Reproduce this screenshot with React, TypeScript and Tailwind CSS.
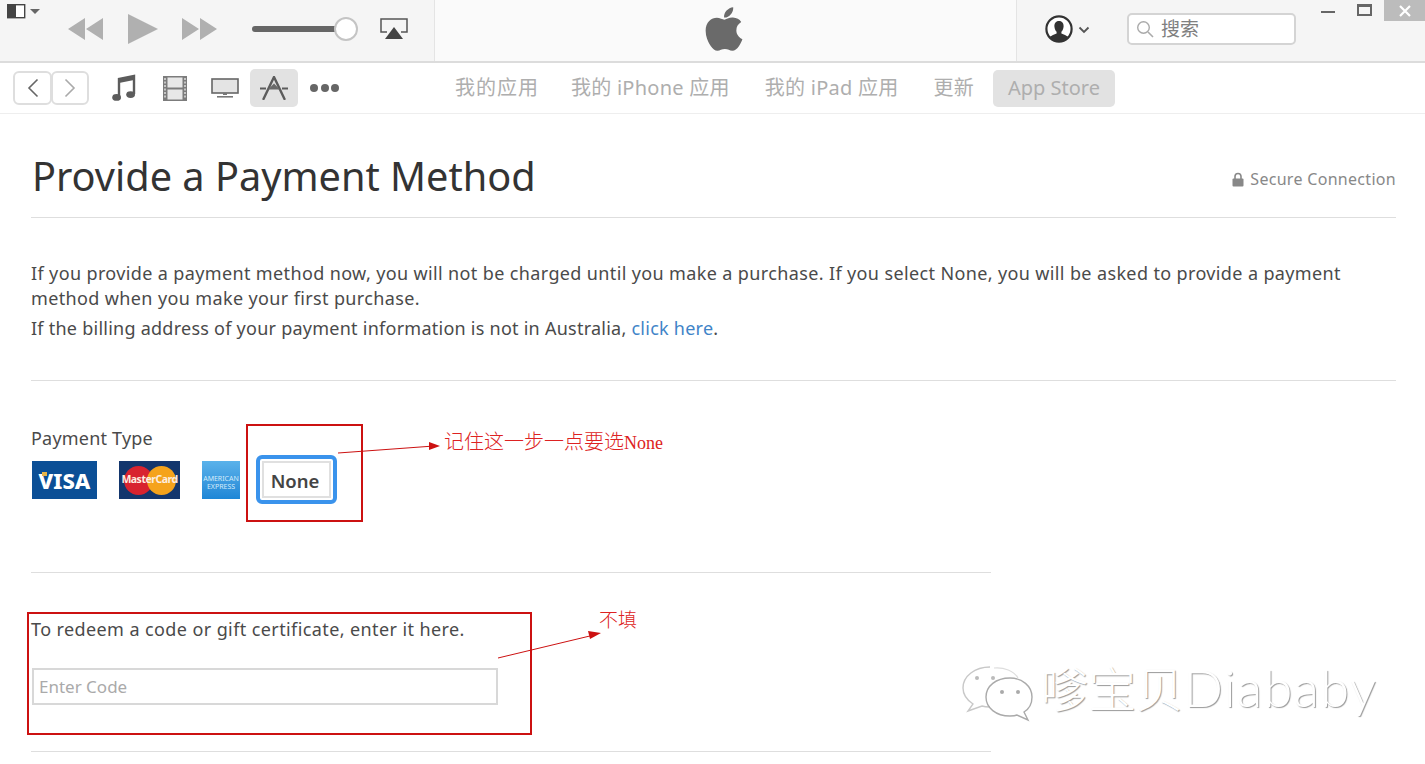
import { FaApple } from "react-icons/fa";

const cjk = "font-['Noto_Sans','Noto_Sans_CJK_SC',sans-serif]";

const Sep = () => <div className="h-px bg-[#dedede]" />;

const TopBar = () => (
  <div className="flex h-[63px] border-b-2 border-[#dcdcdc] bg-[#f5f5f5]">
    <div className="relative flex w-[434px] items-start">
      <svg className="absolute left-[7px] top-[4px]" width="34" height="15" viewBox="0 0 34 15">
        <rect x="0.7" y="0.7" width="17" height="13" fill="#fff" stroke="#444" strokeWidth="1.4" />
        <rect x="1" y="1" width="8" height="13" fill="#444" />
        <path d="M23 5h10l-5 5z" fill="#666" />
      </svg>
      <svg className="ml-[68px] mt-[18px]" width="35" height="22" viewBox="0 0 35 22">
        <path d="M0 11 17 0v22zM18 11 35 0v22z" fill="#b0b0b0" />
      </svg>
      <svg className="ml-[25px] mt-[14px]" width="30" height="30" viewBox="0 0 30 30">
        <path d="M0 0 30 15 0 30z" fill="#b0b0b0" />
      </svg>
      <svg className="ml-[24px] mt-[18px]" width="35" height="22" viewBox="0 0 35 22">
        <path d="M0 0 17 11 0 22zM18 0 35 11 18 22z" fill="#b0b0b0" />
      </svg>
      <div className="ml-[35px] mt-[26px] h-[6px] w-[88px] rounded-full bg-[#666]" />
      <div className="ml-[-6px] mt-[17px] h-[24px] w-[24px] rounded-full border-2 border-[#c4c4c4] bg-white" />
      <svg className="ml-[22px] mt-[18px]" width="28" height="22" viewBox="0 0 28 22">
        <path d="M7 14H1V1h26v13h-6" fill="none" stroke="#555" strokeWidth="1.5" />
        <path d="M14 9 23 21H5z" fill="#444" />
      </svg>
    </div>
    <div className="flex flex-1 justify-center border-x border-[#e4e4e4] bg-[#fafafa] pr-[3px] pt-[4px]">
      <FaApple className="text-[#6a6a6a]" size={50} />
    </div>
    <div className="relative flex w-[408px] items-start">
      <svg className="ml-[28px] mt-[15px]" width="28" height="28" viewBox="0 0 28 28">
        <circle cx="14" cy="14" r="12.6" fill="#fff" stroke="#333" strokeWidth="2.2" />
        <path d="M14 6c3.4 0 4.8 2.6 4.6 5.6-.2 2.4-1.2 4.4-2.2 5.2v1.6c2.4 1 5 2 6.8 3.4A12.6 12.6 0 0 1 14 26.6 12.6 12.6 0 0 1 4.8 21.8c1.8-1.4 4.4-2.4 6.8-3.4v-1.6c-1-.8-2-2.8-2.2-5.2C9.2 8.6 10.6 6 14 6z" fill="#333" />
      </svg>
      <svg className="ml-[5px] mt-[26px]" width="12" height="8" viewBox="0 0 12 8">
        <path d="M1.5 1.5 6 6l4.5-4.5" fill="none" stroke="#555" strokeWidth="1.8" />
      </svg>
      <div className="ml-[37px] mt-[13px] flex h-[32px] w-[169px] items-center rounded-[5px] border-2 border-[#d4d4d4] bg-white pl-[6px]">
        <svg width="20" height="20" viewBox="0 0 20 20">
          <circle cx="8.5" cy="8.5" r="5.8" fill="none" stroke="#aaa" strokeWidth="1.4" />
          <path d="m13 13 5 5" stroke="#aaa" strokeWidth="1.6" />
        </svg>
        <span className={`ml-[6px] text-[19px] leading-none text-[#808080] ${cjk}`}>搜索</span>
      </div>
      <div className="ml-[25px] mt-[11px] h-[2px] w-[14px] bg-[#666]" />
      <div className="ml-[22px] mt-[4px] h-[12px] w-[15px] border-2 border-t-[3px] border-[#666]" />
      <div className="ml-[12px] flex h-[21px] w-[41px] items-center justify-center bg-[#bcbcbc]">
        <svg width="12" height="12" viewBox="0 0 12 12">
          <path d="m1 1 10 10M11 1 1 11" stroke="#fff" strokeWidth="2.2" />
        </svg>
      </div>
    </div>
  </div>
);

const NavBar = () => (
  <div className="flex h-[51px] items-center border-b border-[#eeeeee] bg-white">
    <div className="ml-[13px] flex h-[34px] w-[39px] items-center justify-center rounded-[6px] border-2 border-[#dedede]">
      <svg width="12" height="20" viewBox="0 0 12 20">
        <path d="M10.5 1.5 2 10l8.5 8.5" fill="none" stroke="#666" strokeWidth="1.6" />
      </svg>
    </div>
    <div className="ml-[-1px] flex h-[34px] w-[38px] items-center justify-center rounded-[6px] border-2 border-[#dedede]">
      <svg width="12" height="20" viewBox="0 0 12 20">
        <path d="M1.5 1.5 10 10l-8.5 8.5" fill="none" stroke="#aaa" strokeWidth="1.6" />
      </svg>
    </div>
    <svg className="ml-[23px]" width="24" height="28" viewBox="0 0 24 28">
      <path d="M7 23V5l15-3v18" fill="none" stroke="#5c5c5c" strokeWidth="2.4" />
      <path d="M7 5l15-3v4L7 9z" fill="#5c5c5c" />
      <ellipse cx="4.6" cy="23.4" rx="4.4" ry="3.4" fill="#5c5c5c" />
      <ellipse cx="18.6" cy="20.6" rx="4.4" ry="3.4" fill="#5c5c5c" />
    </svg>
    <svg className="ml-[27px]" width="24" height="25" viewBox="0 0 24 25">
      <rect x="0" y="0" width="24" height="25" fill="#7c7c7c" />
      <rect x="4.5" y="1.5" width="15" height="10" fill="#e8e8e8" />
      <rect x="4.5" y="13.5" width="15" height="10" fill="#e8e8e8" />
      <path d="M2 2v21M22 2v21" stroke="#ddd" strokeWidth="1.5" strokeDasharray="2 1.5" />
    </svg>
    <svg className="ml-[24px]" width="28" height="20" viewBox="0 0 28 20">
      <rect x="1" y="1" width="26" height="14" fill="#e4e4e4" stroke="#666" strokeWidth="1.6" />
      <path d="M12 15h4v2h-4z" fill="#777" />
      <path d="M6 18h16v1.6H6z" fill="#777" />
    </svg>
    <div className="ml-[11px] flex h-[38px] w-[48px] items-center justify-center rounded-[5px] bg-[#e2e2e2]">
      <svg width="28" height="24" viewBox="0 0 28 24">
        <path d="M14 1 3.5 23M14 1l10.5 22" stroke="#5c5c5c" strokeWidth="2.4" fill="none" strokeLinecap="round" />
        <path d="M0 12.5h6M22 12.5h6" stroke="#5c5c5c" strokeWidth="2" />
        <path d="M8 13.5h12l-6-6z" fill="#6a6a6a" />
      </svg>
    </div>
    <div className="ml-[12px] flex w-[29px] justify-between">
      <div className="h-[8px] w-[8px] rounded-full bg-[#666]" />
      <div className="h-[8px] w-[8px] rounded-full bg-[#666]" />
      <div className="h-[8px] w-[8px] rounded-full bg-[#666]" />
    </div>
    <div className={`ml-[116px] flex items-center text-[20px] tracking-[0.25px] text-[#aeaeae] ${cjk}`}>
      <span className="tracking-[1px]">我的应用</span>
      <span className="ml-[32px]">我的 iPhone 应用</span>
      <span className="ml-[35px]">我的 iPad 应用</span>
      <span className="ml-[35px]">更新</span>
      <span className="ml-[19px] flex h-[37px] w-[122px] items-center justify-center rounded-[5px] bg-[#e2e2e2] tracking-normal">App Store</span>
    </div>
  </div>
);

const Cards = () => (
  <div className="mt-[11px] flex items-start">
    <div className="relative ml-px flex h-[38px] w-[65px] items-center justify-center bg-[#0b4f96] text-[22px] font-extrabold text-white">
      VISA
      <span className="absolute left-[10px] top-[11px] h-[4px] w-[5px] bg-[#e8b54a]" />
    </div>
    <div className="relative ml-[22px] flex h-[38px] w-[61px] items-center justify-center overflow-hidden bg-[#13366d]">
      <div className="h-[29px] w-[29px] rounded-full bg-[#d8232f]" />
      <div className="ml-[-6px] h-[29px] w-[29px] rounded-full bg-[#f5a31c]" />
      <span className="absolute text-[10.5px] font-bold tracking-[-0.5px] text-[#fdeee0]">MasterCard</span>
    </div>
    <div className="ml-[22px] flex h-[38px] w-[38px] items-center justify-center overflow-hidden bg-gradient-to-b from-[#5ab2ea] to-[#1d86d6] pt-[6px] text-center text-[7px] leading-[8px] text-[#d5ecfa]">
      AMERICAN EXPRESS
    </div>
    <div className="ml-[16px] mt-[-6px] flex h-[49px] w-[81px] items-center justify-center rounded-[6px] border-[4px] border-[#3a93ec] bg-white">
      <div className="flex h-[37px] w-[69px] items-center justify-center border-2 border-[#e0e0e0] pr-[3px] pt-[2px] text-[18.5px] font-semibold text-[#444]">None</div>
    </div>
  </div>
);

const Annotations = () => (
  <>
    <div className="absolute left-[246px] top-[424px] h-[98px] w-[117px] border-2 border-[#cc1111]" />
    <div className="absolute left-[27px] top-[612px] h-[123px] w-[505px] border-2 border-[#cc1111]" />
    <svg className="absolute left-[330px] top-[430px]" width="120" height="30" viewBox="0 0 120 30">
      <path d="M8 23 104 16" stroke="#cc1111" strokeWidth="1" />
      <path d="M110 16 99 12v8z" fill="#cc1111" />
    </svg>
    <span className="absolute left-[444px] top-[430px] font-['Liberation_Serif','Noto_Sans_CJK_SC',serif] text-[20px] font-light leading-[24px] text-[#dd2222]">
      记住这一步一点要选<span className="text-[18px]">None</span>
    </span>
    <svg className="absolute left-[490px] top-[625px]" width="120" height="40" viewBox="0 0 120 40">
      <path d="M8 33 104 10" stroke="#cc1111" strokeWidth="1" />
      <path d="M111 8 98 6l2 8z" fill="#cc1111" />
    </svg>
    <span className={`absolute left-[599px] top-[608px] text-[19px] font-light leading-[24px] text-[#dd2222] ${cjk}`}>不填</span>
    <svg className="absolute left-[960px] top-[664px]" width="76" height="60" viewBox="0 0 76 60">
      <path d="M30 3C15 3 3 12 3 24c0 7 4 12 10 16l-5 7 14-5c3 1 5 1 8 1" fill="none" stroke="#c8c8c8" strokeWidth="1.4" />
      <path d="M58 14c-4-7-14-11-24-10" fill="none" stroke="#dddddd" strokeWidth="1.2" />
      <path d="M50 14c-14 0-24 8-24 19s10 19 24 19c3 0 5 0 7-1l11 5-4-8c5-3 8-9 8-15 0-11-10-19-22-19z" fill="none" stroke="#aaaaaa" strokeWidth="1.4" />
      <circle cx="17" cy="14" r="2" fill="#bbb" />
      <circle cx="33" cy="14" r="2" fill="#bbb" />
      <circle cx="42" cy="28" r="2" fill="#aaa" />
      <circle cx="58" cy="28" r="2" fill="#aaa" />
    </svg>
    <span className={`absolute left-[1041px] top-[654px] flex items-baseline text-[47.5px] font-light leading-[66px] text-white [text-shadow:1px_1px_1px_#9a9a9a] ${cjk}`}>
      嗲宝贝
      <span className="font-['Lato',sans-serif] text-[52px] font-light tracking-[1.5px]">Diababy</span>
    </span>
  </>
);

export default function App() {
  return (
    <div className={`relative h-[764px] w-[1425px] overflow-hidden bg-white text-[#4a4a4a] ${cjk}`}>
      <TopBar />
      <NavBar />
      <main className="pl-[31px] pr-[29px]">
        <div className="flex h-[103px] items-center justify-between pt-[22px]">
          <h1 className="ml-px text-[39.7px] text-[#333]">Provide a Payment Method</h1>
          <div className="mt-[5px] flex items-center text-[16px] tracking-[0.3px] text-[#888]">
            <svg className="mr-[6px]" width="12" height="15" viewBox="0 0 12 15">
              <path d="M3 7V4.5a3 3 0 0 1 6 0V7" fill="none" stroke="#888" strokeWidth="1.6" />
              <rect x="0.5" y="6.5" width="11" height="8" rx="1" fill="#888" />
            </svg>
            Secure Connection
          </div>
        </div>
        <Sep />
        <div className="pt-[43px] text-[18px] leading-[25px]">
          <p className="max-w-[1330px] tracking-[0.37px]">
            If you provide a payment method now, you will not be charged until you make a purchase. If you select None, you will be asked to provide a payment method when you make your first purchase.
          </p>
          <p className="mt-[5px] tracking-[0.25px]">
            If the billing address of your payment information is not in Australia, <span className="text-[#3f84c8]">click here</span>.
          </p>
        </div>
        <div className="mt-[39px]"><Sep /></div>
        <div className="mt-[45px] text-[18px] leading-[24px] tracking-[0.2px]">Payment Type</div>
        <Cards />
        <div className="mt-[68px] w-[960px]"><Sep /></div>
        <div className="mt-[44px] text-[18px] leading-[25px] tracking-[0.4px]">To redeem a code or gift certificate, enter it here.</div>
        <div className="ml-px mt-[26px] flex h-[37px] w-[466px] items-center border-2 border-[#d8d8d8] px-[5px] text-[17px] text-[#aaa]">Enter Code</div>
        <div className="mt-[46px] w-[960px]"><Sep /></div>
      </main>
      <Annotations />
    </div>
  );
}
